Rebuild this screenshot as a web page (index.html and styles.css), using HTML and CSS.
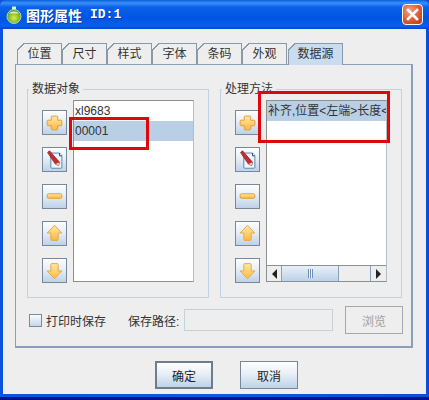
FILE: index.html
```html
<!DOCTYPE html>
<html lang="zh-CN">
<head>
    <meta charset="UTF-8">
    <meta name="viewport" content="width=device-width, initial-scale=1.0">
    <title>图形属性</title>
    <link rel="stylesheet" href="styles.css">
</head>
<body>
    <svg class="icon-defs" width="0" height="0">
        <defs>
            <linearGradient id="gold" x1="0" y1="0" x2="0" y2="1">
                <stop offset="0" stop-color="#ffe9a6"/>
                <stop offset="1" stop-color="#ffb83e"/>
            </linearGradient>
            <radialGradient id="gem" cx="0.5" cy="0.6" r="0.6">
                <stop offset="0" stop-color="#d8f04a"/>
                <stop offset="1" stop-color="#4c9a1c"/>
            </radialGradient>
            <symbol id="icon-plus" viewBox="0 0 25 25">
                <path d="M10 5.500h5a1 1 0 0 1 1 1v3.500h3.500a1 1 0 0 1 1 1v4a1 1 0 0 1-1 1H16v3.500a1 1 0 0 1-1 1h-5a1 1 0 0 1-1-1V16H5.500a1 1 0 0 1-1-1v-4a1 1 0 0 1 1-1H9V6.500a1 1 0 0 1 1-1z" fill="url(#gold)" stroke="#dc9b3c"/>
            </symbol>
            <symbol id="icon-edit" viewBox="0 0 25 25">
                <path d="M8.500 5.500H18l2.500 3V21a1 1 0 0 1-1 1h-10a1 1 0 0 1-1-1z" fill="#eef5fb" stroke="#4f7fae"/>
                <path d="M18 5.500v3h2.500" fill="#fff" stroke="#333"/>
                <path d="M5 5l2-2 11 12.500-1 3.500-3.500-1.500z" fill="#cc2a2e" stroke="#7a1f22" stroke-width="0.800"/>
                <path d="M13.500 17.500l3.500 1.500 1-3.500z" fill="#f3d6a8"/>
            </symbol>
            <symbol id="icon-minus" viewBox="0 0 25 25">
                <rect x="4.500" y="9.500" width="16" height="5" rx="1.500" fill="url(#gold)" stroke="#dc9b3c"/>
            </symbol>
            <symbol id="icon-up" viewBox="0 0 25 25">
                <path d="M12.500 3.500l8 8.500H16.500v7a1 1 0 0 1-1 1h-6a1 1 0 0 1-1-1v-7H4.500z" fill="url(#gold)" stroke="#e3a64a"/>
            </symbol>
            <symbol id="icon-down" viewBox="0 0 25 25">
                <path d="M12.500 21.500l-8-8.500H8.500V6a1 1 0 0 1 1-1h6a1 1 0 0 1 1 1v7h4z" fill="url(#gold)" stroke="#e3a64a"/>
            </symbol>
        </defs>
    </svg>

    <div class="window">
        <div class="titlebar">
            <svg class="app-icon" width="18" height="20" viewBox="0 0 18 20">
                <path d="M7 1.500h4v3H7z" fill="#d9efe0"/>
                <circle cx="9" cy="11.500" r="7" fill="url(#gem)" stroke="#d7e9c8" stroke-width="0.800"/>
                <path d="M4 8.500a5.500 3.500 0 0 1 10 0z" fill="#e6f5dc" opacity="0.850"/>
            </svg>
            <span class="title-text">图形属性</span>
            <span class="title-id">ID:1</span>
            <button class="close-btn" aria-label="关闭">
                <svg width="19" height="19" viewBox="0 0 19 19">
                    <path d="M5 5l9 9M14 5l-9 9" stroke="#fff" stroke-width="2.600" stroke-linecap="square"/>
                </svg>
            </button>
        </div>

        <div class="client">
            <div class="tabs">
                <div class="tab">位置</div>
                <div class="tab">尺寸</div>
                <div class="tab">样式</div>
                <div class="tab">字体</div>
                <div class="tab">条码</div>
                <div class="tab">外观</div>
                <div class="tab active">数据源</div>
            </div>

            <div class="panel">
                <div class="groups">
                    <fieldset class="group">
                        <legend>数据对象</legend>
                        <div class="group-body">
                            <div class="tools">
                                <button class="tool"><svg><use href="#icon-plus"/></svg></button>
                                <button class="tool"><svg><use href="#icon-edit"/></svg></button>
                                <button class="tool"><svg><use href="#icon-minus"/></svg></button>
                                <button class="tool"><svg><use href="#icon-up"/></svg></button>
                                <button class="tool"><svg><use href="#icon-down"/></svg></button>
                            </div>
                            <div class="list">
                                <div class="row">xl9683</div>
                                <div class="row selected">00001</div>
                            </div>
                        </div>
                    </fieldset>

                    <fieldset class="group">
                        <legend>处理方法</legend>
                        <div class="group-body">
                            <div class="tools">
                                <button class="tool"><svg><use href="#icon-plus"/></svg></button>
                                <button class="tool"><svg><use href="#icon-edit"/></svg></button>
                                <button class="tool"><svg><use href="#icon-minus"/></svg></button>
                                <button class="tool"><svg><use href="#icon-up"/></svg></button>
                                <button class="tool"><svg><use href="#icon-down"/></svg></button>
                            </div>
                            <div class="list">
                                <div class="row selected">补齐,位置&lt;左端&gt;长度&lt;</div>
                                <div class="spacer"></div>
                                <div class="scrollbar">
                                    <div class="sb-arrow"><span class="tri-left"></span></div>
                                    <div class="sb-thumb"><span class="grip"></span></div>
                                    <div class="sb-track"></div>
                                    <div class="sb-arrow"><span class="tri-right"></span></div>
                                </div>
                            </div>
                        </div>
                    </fieldset>
                </div>

                <div class="save-row">
                    <span class="checkbox"></span>
                    <span class="check-label">打印时保存</span>
                    <span class="path-label">保存路径:</span>
                    <span class="path-input"></span>
                    <button class="btn browse" disabled>浏览</button>
                </div>
            </div>

            <div class="footer">
                <button class="btn primary">确定</button>
                <button class="btn">取消</button>
            </div>
        </div>

        <div class="mark mark-left"></div>
        <div class="mark mark-right"></div>
    </div>
</body>
</html>
```

FILE: styles.css
```css
* {
    margin: 0;
    padding: 0;
    box-sizing: border-box;
}

body {
    font-family: "Liberation Sans", "Noto Sans CJK SC", sans-serif;
    font-size: 12px;
    color: #333;
    overflow: hidden;
}

.icon-defs {
    position: absolute;
}

.window {
    position: relative;
    width: 429px;
    height: 400px;
    padding: 0 3px 3px;
    background: linear-gradient(to right, #0a55dc, #0a5ae6 50%, #0a4fd6);
    border-bottom: 3px solid #00138c;
    overflow: hidden;
}

.titlebar {
    display: flex;
    align-items: center;
    height: 29px;
    margin: 0 -3px;
    padding: 0 6px 0 5px;
    background: linear-gradient(to bottom, #0a5fe0 0, #3c90f5 3px, #0a62ea 7px, #0054e3 18px, #0a5fee 26px, #0645c8 29px);
    border-radius: 6px 6px 0 0;
    color: #fff;
}

.app-icon {
    margin-right: 3px;
}

.title-text {
    font-size: 14px;
    font-weight: bold;
    text-shadow: 1px 1px 0 #0a3aa8;
}

.title-id {
    margin-left: 8px;
    font-family: "Liberation Mono", monospace;
    font-size: 13px;
    font-weight: bold;
    text-shadow: 1px 1px 0 #0a3aa8;
}

.close-btn {
    display: flex;
    margin-left: auto;
    width: 21px;
    height: 21px;
    align-items: center;
    justify-content: center;
    border: 1px solid #fff;
    border-radius: 4px;
    background: radial-gradient(circle at 35% 30%, #f0a080, #d8552e 60%, #b83a18);
}

.client {
    height: 365px;
    padding-top: 14px;
    background: #eee;
}

.tabs {
    display: flex;
    height: 21px;
    margin-left: 14px;
}

.tab {
    position: relative;
    width: 45px;
    height: 21px;
    line-height: 21px;
    text-align: center;
    background: #eee;
    border: 1px solid #8a99a8;
    border-bottom: none;
}

.tab::before {
    content: "";
    position: absolute;
    left: -1px;
    top: -1px;
    width: 7px;
    height: 7px;
    background: linear-gradient(to bottom right, #eee 44%, #8a99a8 44%, #8a99a8 58%, transparent 58%);
}

.tab.active {
    width: 55px;
    height: 22px;
    margin-left: 1px;
    background: #c9dcf0;
    z-index: 1;
}

.panel {
    width: 398px;
    height: 284px;
    margin-left: 12px;
    padding: 16px 0 0 11px;
    border: 1px solid #8aa0b8;
    border-bottom-width: 2px;
    border-right-width: 2px;
}

.groups {
    display: flex;
    gap: 11px;
}

.group {
    width: 181px;
    height: 217px;
    padding: 0 14px;
    border: 1px solid #c3d2e0;
}

.group legend {
    margin-left: -13px;
    padding: 0 3px;
    line-height: 16px;
}

.group-body {
    display: flex;
    gap: 6px;
    padding-top: 3px;
}

.tools {
    display: flex;
    flex-direction: column;
    gap: 12px;
    margin-top: 10px;
}

.tool {
    width: 25px;
    height: 25px;
    border: 1px solid #76889a;
    background: linear-gradient(to bottom, #fdfeff, #e6eef6 45%, #bdd2e8);
}

.tool svg {
    display: block;
    width: 23px;
    height: 23px;
}

.list {
    display: flex;
    flex-direction: column;
    width: 121px;
    height: 182px;
    background: #fff;
    border: 1px solid #8a9094;
    border-right-color: #b4bcc4;
    overflow: hidden;
}

.row {
    flex: none;
    height: 20px;
    padding-left: 1px;
    line-height: 20px;
    white-space: nowrap;
    overflow: hidden;
}

.row.selected {
    background: #b8cfe6;
}

.spacer {
    flex: 1;
}

.scrollbar {
    display: flex;
    flex: none;
    height: 16px;
    background: #eee;
    border-top: 1px solid #8a9094;
}

.sb-arrow {
    display: flex;
    flex: none;
    align-items: center;
    justify-content: center;
    width: 15px;
    background: #eee;
    border-right: 1px solid #8aa0b8;
}

.sb-arrow:last-child {
    width: 16px;
    border-right: none;
    border-left: 1px solid #8aa0b8;
}

.tri-left {
    border: 5px solid transparent;
    border-left: none;
    border-right: 5px solid #222;
}

.tri-right {
    border: 5px solid transparent;
    border-right: none;
    border-left: 5px solid #222;
}

.sb-thumb {
    display: flex;
    flex: none;
    align-items: center;
    justify-content: center;
    width: 57px;
    background: linear-gradient(to bottom, #e8f0f8, #bcd2e8);
    border-right: 1px solid #8aa0b8;
}

.grip {
    width: 5px;
    height: 9px;
    background: repeating-linear-gradient(to right, #6f8fb4 0, #6f8fb4 1px, #eef4fa 1px, #eef4fa 2px);
}

.sb-track {
    flex: 1;
}

.save-row {
    display: flex;
    align-items: center;
    height: 28px;
    margin-top: 8px;
    padding-left: 2px;
}

.save-row > * {
    flex: none;
}

.checkbox {
    width: 13px;
    height: 13px;
    border: 1px solid #7c8a98;
    background: linear-gradient(to bottom, #fafcfe, #c4d6e8);
}

.check-label {
    width: 82px;
    margin-left: 4px;
    white-space: nowrap;
}

.path-label {
    width: 56px;
    white-space: nowrap;
}

.path-input {
    width: 149px;
    height: 22px;
    border: 1px solid #c3d2e0;
    background: #eee;
}

.btn {
    width: 58px;
    height: 28px;
    font-family: inherit;
    font-size: 12px;
    color: #222;
    border: 1px solid #76889a;
    background: linear-gradient(to bottom, #fdfeff, #e8eff6 45%, #bdd2e8);
}

.btn.browse {
    margin-left: 12px;
    color: #a0a0a0;
    border-color: #a4a8ac;
    background: #eee;
}

.btn.primary {
    border: 2px solid #6f7d8a;
}

.footer {
    display: flex;
    gap: 27px;
    margin-top: 13px;
    margin-left: 152px;
}

/* red annotation boxes drawn over the dialog */
.mark {
    position: absolute;
    border: 3px solid #e0060c;
}

.mark-left {
    left: 69px;
    top: 117px;
    width: 80px;
    height: 33px;
}

.mark-right {
    left: 258px;
    top: 91px;
    width: 132px;
    height: 52px;
}
```
